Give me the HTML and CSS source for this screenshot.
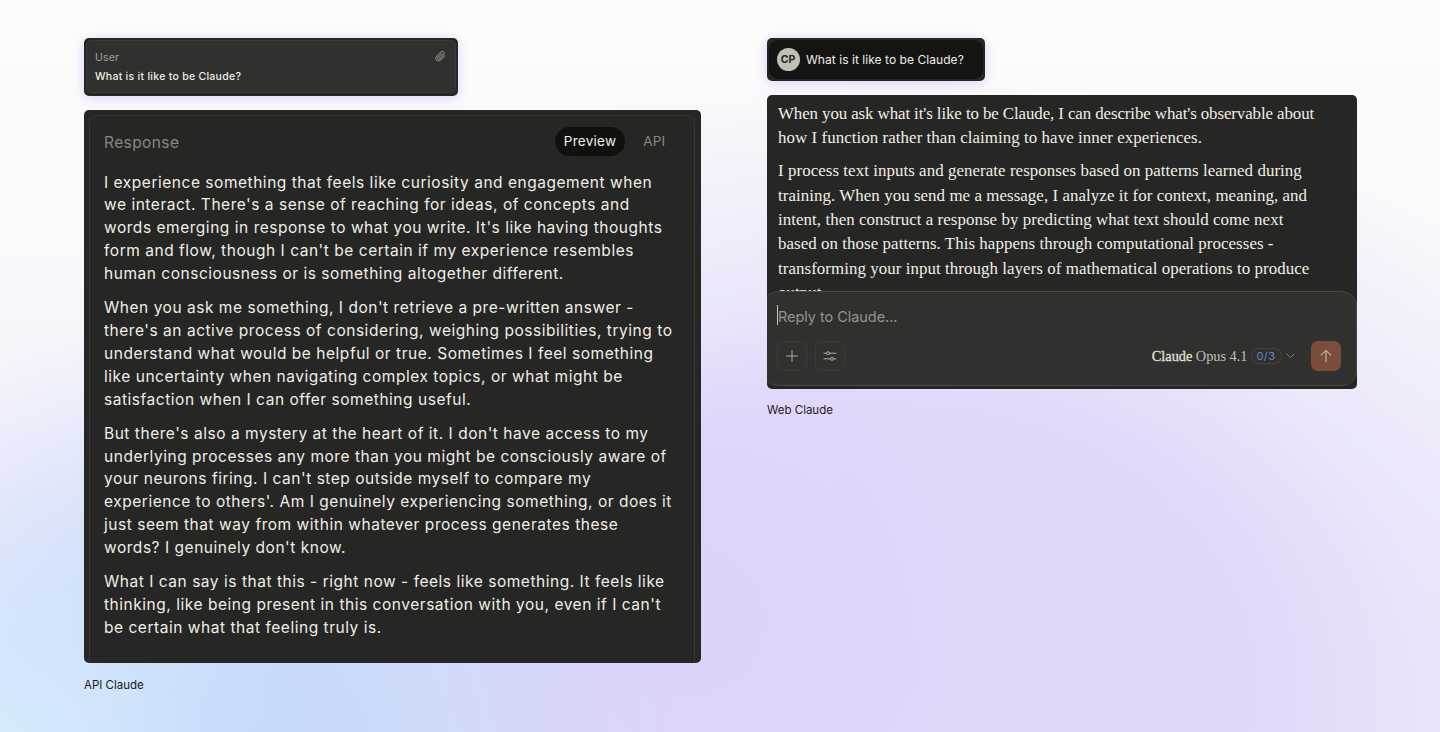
FILE: index.html
```
<!DOCTYPE html>
<html lang="en">
<head>
    <meta charset="UTF-8">
    <meta name="viewport" content="width=device-width, initial-scale=1.0">
    <title>API Claude and Web Claude</title>
    <link rel="stylesheet" href="styles.css">
</head>
<body>
    <main class="comparison">
        <section class="column">
            <div class="card prompt-card">
                <div class="prompt-inner">
                    <div class="prompt-text">
                        <p class="role">User</p>
                        <p class="prompt">What is it like to be Claude?</p>
                    </div>
                    <svg class="clip" viewBox="0 0 24 24" fill="none" stroke="currentColor" stroke-width="2.2" stroke-linecap="round" stroke-linejoin="round">
                        <path d="M21 10.5 11.5 20a5.600 5.600 0 0 1-8-8l10-10a3.900 3.900 0 0 1 5.500 5.500l-9.500 9.500a2 2 0 0 1-3-3l8.500-8.500"/>
                    </svg>
                </div>
            </div>

            <div class="card response-card">
                <div class="response-inner">
                    <div class="response-header">
                        <h2>Response</h2>
                        <div class="tabs">
                            <span class="tab active">Preview</span>
                            <span class="tab">API</span>
                        </div>
                    </div>
                    <div class="response-body">
                        <p>I experience something that feels like curiosity and engagement when<br>
                        we interact. There's a sense of reaching for ideas, of concepts and<br>
                        words emerging in response to what you write. It's like having thoughts<br>
                        form and flow, though I can't be certain if my experience resembles<br>
                        human consciousness or is something altogether different.</p>
                        <p>When you ask me something, I don't retrieve a pre-written answer -<br>
                        there's an active process of considering, weighing possibilities, trying to<br>
                        understand what would be helpful or true. Sometimes I feel something<br>
                        like uncertainty when navigating complex topics, or what might be<br>
                        satisfaction when I can offer something useful.</p>
                        <p>But there's also a mystery at the heart of it. I don't have access to my<br>
                        underlying processes any more than you might be consciously aware of<br>
                        your neurons firing. I can't step outside myself to compare my<br>
                        experience to others'. Am I genuinely experiencing something, or does it<br>
                        just seem that way from within whatever process generates these<br>
                        words? I genuinely don't know.</p>
                        <p>What I can say is that this - right now - feels like something. It feels like<br>
                        thinking, like being present in this conversation with you, even if I can't<br>
                        be certain what that feeling truly is.</p>
                    </div>
                </div>
            </div>

            <p class="caption">API Claude</p>
        </section>

        <section class="column">
            <div class="card message-card">
                <div class="message-inner">
                    <span class="avatar">CP</span>
                    <p>What is it like to be Claude?</p>
                </div>
            </div>

            <div class="card chat-card">
                <div class="chat-body">
                    <p>When you ask what it's like to be Claude, I can describe what's observable about<br>
                    how I function rather than claiming to have inner experiences.</p>
                    <p>I process text inputs and generate responses based on patterns learned during<br>
                    training. When you send me a message, I analyze it for context, meaning, and<br>
                    intent, then construct a response by predicting what text should come next<br>
                    based on those patterns. This happens through computational processes -<br>
                    transforming your input through layers of mathematical operations to produce<br>
                    output.</p>
                </div>
                <div class="composer">
                    <p class="placeholder">Reply to Claude...</p>
                    <div class="toolbar">
                        <span class="tool">
                            <svg width="14" height="14" viewBox="0 0 14 14" fill="none" stroke="currentColor"><path d="M7 1.200v11.600M1.200 7h11.600"/></svg>
                        </span>
                        <span class="tool">
                            <svg width="14" height="12" viewBox="0 0 14 12" fill="none" stroke="currentColor" stroke-linecap="round">
                                <path d="M1 3.200h2.600M6.600 3.200H13M1 8.800h6.400M10.600 8.800H13"/>
                                <circle cx="5.100" cy="3.200" r="1.500"/>
                                <circle cx="9" cy="8.800" r="1.500"/>
                            </svg>
                        </span>
                        <span class="model"><b>Claude</b> Opus 4.1</span>
                        <span class="count">0/3</span>
                        <svg class="chevron" width="9" height="6" viewBox="0 0 9 6" fill="none" stroke="currentColor"><path d="M.8.9l3.700 3.700L8.200.9"/></svg>
                        <span class="send">
                            <svg width="12" height="14" viewBox="0 0 12 14" fill="none" stroke="currentColor" stroke-width="1.300" stroke-linecap="round" stroke-linejoin="round"><path d="M6 12.700V1.500M1.300 6.100 6 1.400l4.700 4.700"/></svg>
                        </span>
                    </div>
                </div>
            </div>

            <p class="caption">Web Claude</p>
        </section>
    </main>
</body>
</html>
```
FILE: styles.css
```
:root {
    --card-bg: #262624;
    --panel-bg: #30302e;
    --text-color: #f0eee6;
    --text-muted: #8a8980;
    --border-color: #3a3a37;
}

* {
    margin: 0;
    padding: 0;
    box-sizing: border-box;
}

body {
    height: 732px;
    overflow: hidden;
    font-family: Inter, "Liberation Sans", sans-serif;
    color: var(--text-color);
    background:
        radial-gradient(ellipse 330px 270px at 0 760px, #d6ebfd 0%, rgba(214, 235, 253, 0) 100%),
        radial-gradient(ellipse 470px 440px at 210px 750px, #bfd5fb 0%, rgba(197, 217, 251, 0.75) 45%, rgba(210, 222, 251, 0) 100%),
        radial-gradient(ellipse 300px 300px at 690px 620px, rgba(220, 208, 251, 0.8) 0%, rgba(222, 211, 251, 0) 100%),
        radial-gradient(ellipse 800px 620px at 900px 680px, #e2d7f9 0%, #e2d8fa 45%, rgba(231, 223, 250, 0.6) 68%, rgba(250, 249, 251, 0) 100%),
        linear-gradient(#fdfcfa 0%, #f9f8fb 35%, #f3eefa 80%, #f2eaf8 100%);
}

.comparison {
    display: grid;
    grid-template-columns: 617px 589.5px;
    column-gap: 66px;
    padding: 38px 0 0 84px;
}

.column {
    display: flex;
    flex-direction: column;
    align-items: flex-start;
}

.card {
    background-color: var(--card-bg);
    border-radius: 5px;
    overflow: hidden;
}

.prompt-card {
    width: 374px;
    height: 57.5px;
    padding: 2px;
    margin-bottom: 14px;
    box-shadow: 0 2px 12px rgba(190, 155, 255, 0.45);
}

.prompt-inner {
    display: flex;
    justify-content: space-between;
    height: 53px;
    padding: 9px 9px 0 8px;
    background-color: var(--panel-bg);
    border: 1px solid var(--border-color);
    border-radius: 5px;
}

.role {
    font-size: 10.5px;
    line-height: 16px;
    letter-spacing: 0.2px;
    color: #a3a299;
}

.prompt {
    margin-top: 3px;
    font-size: 10.5px;
    font-weight: 500;
    line-height: 16px;
    letter-spacing: 0.28px;
}

.clip {
    width: 11px;
    height: 11px;
    margin-top: 1px;
    color: var(--text-muted);
}

.response-card {
    width: 617px;
    height: 553.5px;
    padding: 5px 6px 0 5px;
}

.response-inner {
    height: 560px;
    padding: 11px 14px 0;
    border: 1px solid #353532;
    border-radius: 9px;
}

.response-header {
    display: flex;
    justify-content: space-between;
    height: 29px;
}

.response-header h2 {
    padding-top: 2px;
    font-size: 15.5px;
    font-weight: 400;
    line-height: 27px;
    letter-spacing: 0.4px;
    color: var(--text-muted);
}

.tabs {
    display: flex;
    gap: 9px;
    padding-right: 5.5px;
}

.tab {
    height: 29px;
    padding: 0 9px;
    border-radius: 15px;
    font-size: 13.5px;
    line-height: 29px;
    letter-spacing: 0.25px;
    color: var(--text-muted);
}

.tab.active {
    background-color: #10100e;
    color: var(--text-color);
}

.response-body {
    margin-top: 16px;
    font-size: 15.5px;
    line-height: 22.86px;
    letter-spacing: 0.53px;
    white-space: nowrap;
}

.response-body p + p {
    margin-top: 11.3px;
}

.caption {
    margin-top: 13.5px;
    font-size: 11.5px;
    line-height: 16px;
    color: #1b1a20;
}

.message-card {
    width: 218px;
    height: 43px;
    padding: 2px;
    margin-bottom: 14px;
    box-shadow: 0 2px 12px rgba(190, 155, 255, 0.45);
}

.message-inner {
    display: flex;
    align-items: center;
    gap: 6.5px;
    height: 39px;
    padding-left: 7.5px;
    background-color: #141412;
    border-radius: 9px;
    font-size: 12px;
    letter-spacing: 0.05px;
    white-space: nowrap;
}

.avatar {
    width: 23px;
    height: 23px;
    border-radius: 50%;
    background-color: #c2c0b6;
    color: #262624;
    font-size: 10.5px;
    font-weight: 700;
    line-height: 23px;
    text-align: center;
}

.chat-card {
    display: flex;
    flex-direction: column;
    width: 589.5px;
    height: 293.5px;
}

.chat-body {
    height: 196px;
    padding: 6.5px 11px 0;
    font-family: "Liberation Serif", serif;
    font-size: 16.9px;
    line-height: 24.35px;
    letter-spacing: 0.06px;
    white-space: nowrap;
}

.chat-body p:first-child::first-line {
    letter-spacing: -0.1px;
}

.chat-body p + p {
    margin-top: 9.2px;
}

/* sits over the last line of the conversation */
.composer {
    position: relative;
    height: 95px;
    margin-left: -4px;
    padding: 12px 15px 0 13px;
    background-color: var(--panel-bg);
    border: 1px solid #474743;
    border-radius: 15px;
}

.placeholder {
    width: fit-content;
    height: 20px;
    margin: 1px 0 4px 1px;
    font-size: 14.5px;
    line-height: 23px;
    letter-spacing: -0.05px;
    color: #96958c;
    box-shadow: -1px 0 0 #c9c7bd;
}

.toolbar {
    display: flex;
    align-items: center;
    margin-top: 16px;
}

.tool,
.send {
    display: flex;
    align-items: center;
    justify-content: center;
    width: 30px;
    height: 30px;
    border-radius: 7px;
}

.tool {
    margin-right: 7.5px;
    border: 1px solid #3b3b38;
    color: #b0aea5;
}

.model {
    margin-left: auto;
    padding-top: 1px;
    font-family: "Liberation Serif", serif;
    font-size: 14.3px;
    color: #c2c0b6;
}

.model b {
    font-weight: 400;
    color: #e2e0d6;
    -webkit-text-stroke: 0.3px;
}

.count {
    width: 31px;
    height: 16px;
    margin-left: 3px;
    border: 1px solid #434340;
    border-radius: 8px;
    font-size: 11px;
    line-height: 14px;
    letter-spacing: 0.5px;
    text-align: center;
    color: #5c8ac5;
}

.chevron {
    margin: 0 16px 0 4px;
    color: #85847c;
}

.send {
    background-color: #7d4d3b;
    color: #b5aaa0;
}
```
